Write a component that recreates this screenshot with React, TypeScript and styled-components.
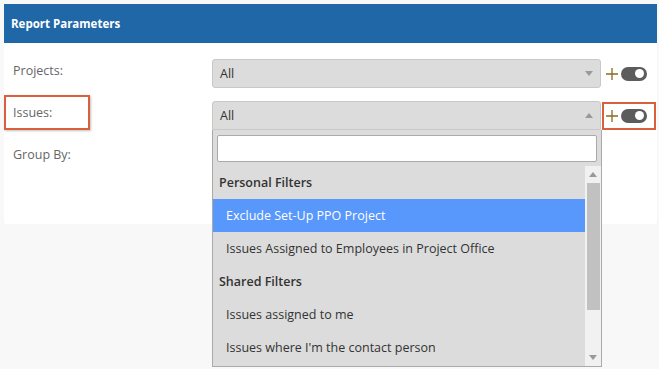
import styled, { createGlobalStyle } from 'styled-components';

const GlobalStyle = createGlobalStyle`
  html, body {
    margin: 0;
    padding: 0;
    background: #f8f8f8;
    font-family: 'Open Sans', 'Noto Sans', sans-serif;
  }
`;

const Page = styled.div`
  padding: 4px 2px 0 4px;
  height: 365px;
  overflow: hidden;
`;

const Card = styled.div`
  width: 653px;
  background: #fff;
  border-radius: 0 0 3px 3px;
`;

const CardHeader = styled.div`
  height: 39px;
  background: #2067a8;
  color: #fff;
  font-size: 11.5px;
  font-weight: 700;
  display: flex;
  align-items: center;
  padding-left: 7px;
`;

const Form = styled.div`
  display: grid;
  grid-template-columns: 199px 389px auto;
  row-gap: 13px;
  padding: 16px 0 52px 9px;
`;

const Label = styled.div<{ $marked?: boolean }>`
  position: relative;
  font-size: 12.5px;
  color: #666;
  padding-top: 3px;
  height: 29px;
  box-sizing: border-box;

  ${({ $marked }) =>
    $marked &&
    `
    &::after {
      content: '';
      position: absolute;
      left: -9px;
      top: -6px;
      width: 82px;
      height: 31px;
      border: 2.5px solid #d9603b;
      box-shadow: 1px 1px 2px rgba(0, 0, 0, 0.25);
    }
  `}
`;

const Control = styled.div`
  position: relative;
`;

const Select = styled.div<{ $open?: boolean }>`
  height: 29px;
  box-sizing: border-box;
  background: #dcdcdc;
  border: 1px solid #c8c8c8;
  border-radius: ${({ $open }) => ($open ? '3px 3px 0 0' : '3px')};
  display: flex;
  align-items: center;
  justify-content: space-between;
  padding: 0 7px;
  font-size: 12.5px;
  color: #333;
`;

const Caret = styled.span<{ $up?: boolean }>`
  width: 0;
  height: 0;
  border-left: 4px solid transparent;
  border-right: 4px solid transparent;
  ${({ $up }) => ($up ? 'border-bottom: 5px solid #999;' : 'border-top: 5px solid #999;')}
`;

const Addon = styled.div<{ $marked?: boolean }>`
  position: relative;
  display: flex;
  align-items: center;
  gap: 2px;
  height: 29px;
  padding-left: 4px;

  ${({ $marked }) =>
    $marked &&
    `
    &::after {
      content: '';
      position: absolute;
      left: 1px;
      top: 1px;
      width: 50px;
      height: 24px;
      border: 2.5px solid #d9603b;
    }
  `}
`;

const Toggle = styled.span`
  width: 26px;
  height: 14px;
  border-radius: 7px;
  background: #5c5c5c;
  display: flex;
  align-items: center;
  justify-content: flex-end;
  padding-right: 3px;
  box-sizing: border-box;

  &::before {
    content: '';
    width: 9px;
    height: 9px;
    border-radius: 50%;
    background: #fff;
  }
`;

const Dropdown = styled.div`
  position: absolute;
  left: 0;
  top: 29px;
  width: 390px;
  box-sizing: border-box;
  background: #dcdcdc;
  border: 1px solid #aaa;
  border-top: none;
  z-index: 5;
`;

const SearchBox = styled.div`
  padding: 5px 4px 4px 4px;
`;

const SearchInput = styled.div`
  height: 27px;
  box-sizing: border-box;
  background: #fff;
  border: 1px solid #aaa;
  border-radius: 2px;
`;

const Results = styled.div`
  display: flex;
  height: 200px;
`;

const List = styled.div`
  flex: 1;
  overflow: hidden;
`;

const Option = styled.div<{ $group?: boolean; $active?: boolean }>`
  height: 33px;
  display: flex;
  align-items: center;
  font-size: 12.5px;
  padding-left: ${({ $group }) => ($group ? '6px' : '13px')};
  font-weight: ${({ $group }) => ($group ? 600 : 400)};
  background: ${({ $active }) => ($active ? '#5897fb' : 'transparent')};
  color: ${({ $active }) => ($active ? '#fff' : '#333')};
`;

const Scrollbar = styled.div`
  width: 16px;
  background: #f1f1f1;
  display: flex;
  flex-direction: column;
  align-items: center;
`;

const ScrollArrow = styled.div`
  height: 17px;
  display: flex;
  align-items: center;
  justify-content: center;
`;

const ScrollTrack = styled.div`
  flex: 1;
  width: 100%;
`;

const Thumb = styled.div`
  width: 13px;
  margin-left: 2px;
  height: 127px;
  background: #c1c1c1;
`;

function PlusIcon() {
  return (
    <svg width="14" height="14" viewBox="0 0 14 14">
      <path d="M7 1v12M1 7h12" stroke="#8a6a1c" strokeWidth="1.3" />
    </svg>
  );
}

const options = [
  { label: 'Personal Filters', group: true },
  { label: 'Exclude Set-Up PPO Project', active: true },
  { label: 'Issues Assigned to Employees in Project Office' },
  { label: 'Shared Filters', group: true },
  { label: 'Issues assigned to me' },
  { label: "Issues where I'm the contact person" },
];

export default function App() {
  return (
    <>
      <GlobalStyle />
      <Page>
        <Card>
          <CardHeader>Report Parameters</CardHeader>
          <Form>
            <Label>Projects:</Label>
            <Control>
              <Select>
                All
                <Caret />
              </Select>
            </Control>
            <Addon>
              <PlusIcon />
              <Toggle />
            </Addon>

            <Label $marked>Issues:</Label>
            <Control>
              <Select $open>
                All
                <Caret $up />
              </Select>
              <Dropdown>
                <SearchBox>
                  <SearchInput />
                </SearchBox>
                <Results>
                  <List>
                    {options.map((o) => (
                      <Option key={o.label} $group={o.group} $active={o.active}>
                        {o.label}
                      </Option>
                    ))}
                  </List>
                  <Scrollbar>
                    <ScrollArrow>
                      <Caret $up />
                    </ScrollArrow>
                    <ScrollTrack>
                      <Thumb />
                    </ScrollTrack>
                    <ScrollArrow>
                      <Caret />
                    </ScrollArrow>
                  </Scrollbar>
                </Results>
              </Dropdown>
            </Control>
            <Addon $marked>
              <PlusIcon />
              <Toggle />
            </Addon>

            <Label>Group By:</Label>
            <Control>
              <Select />
            </Control>
            <div />
          </Form>
        </Card>
      </Page>
    </>
  );
}
